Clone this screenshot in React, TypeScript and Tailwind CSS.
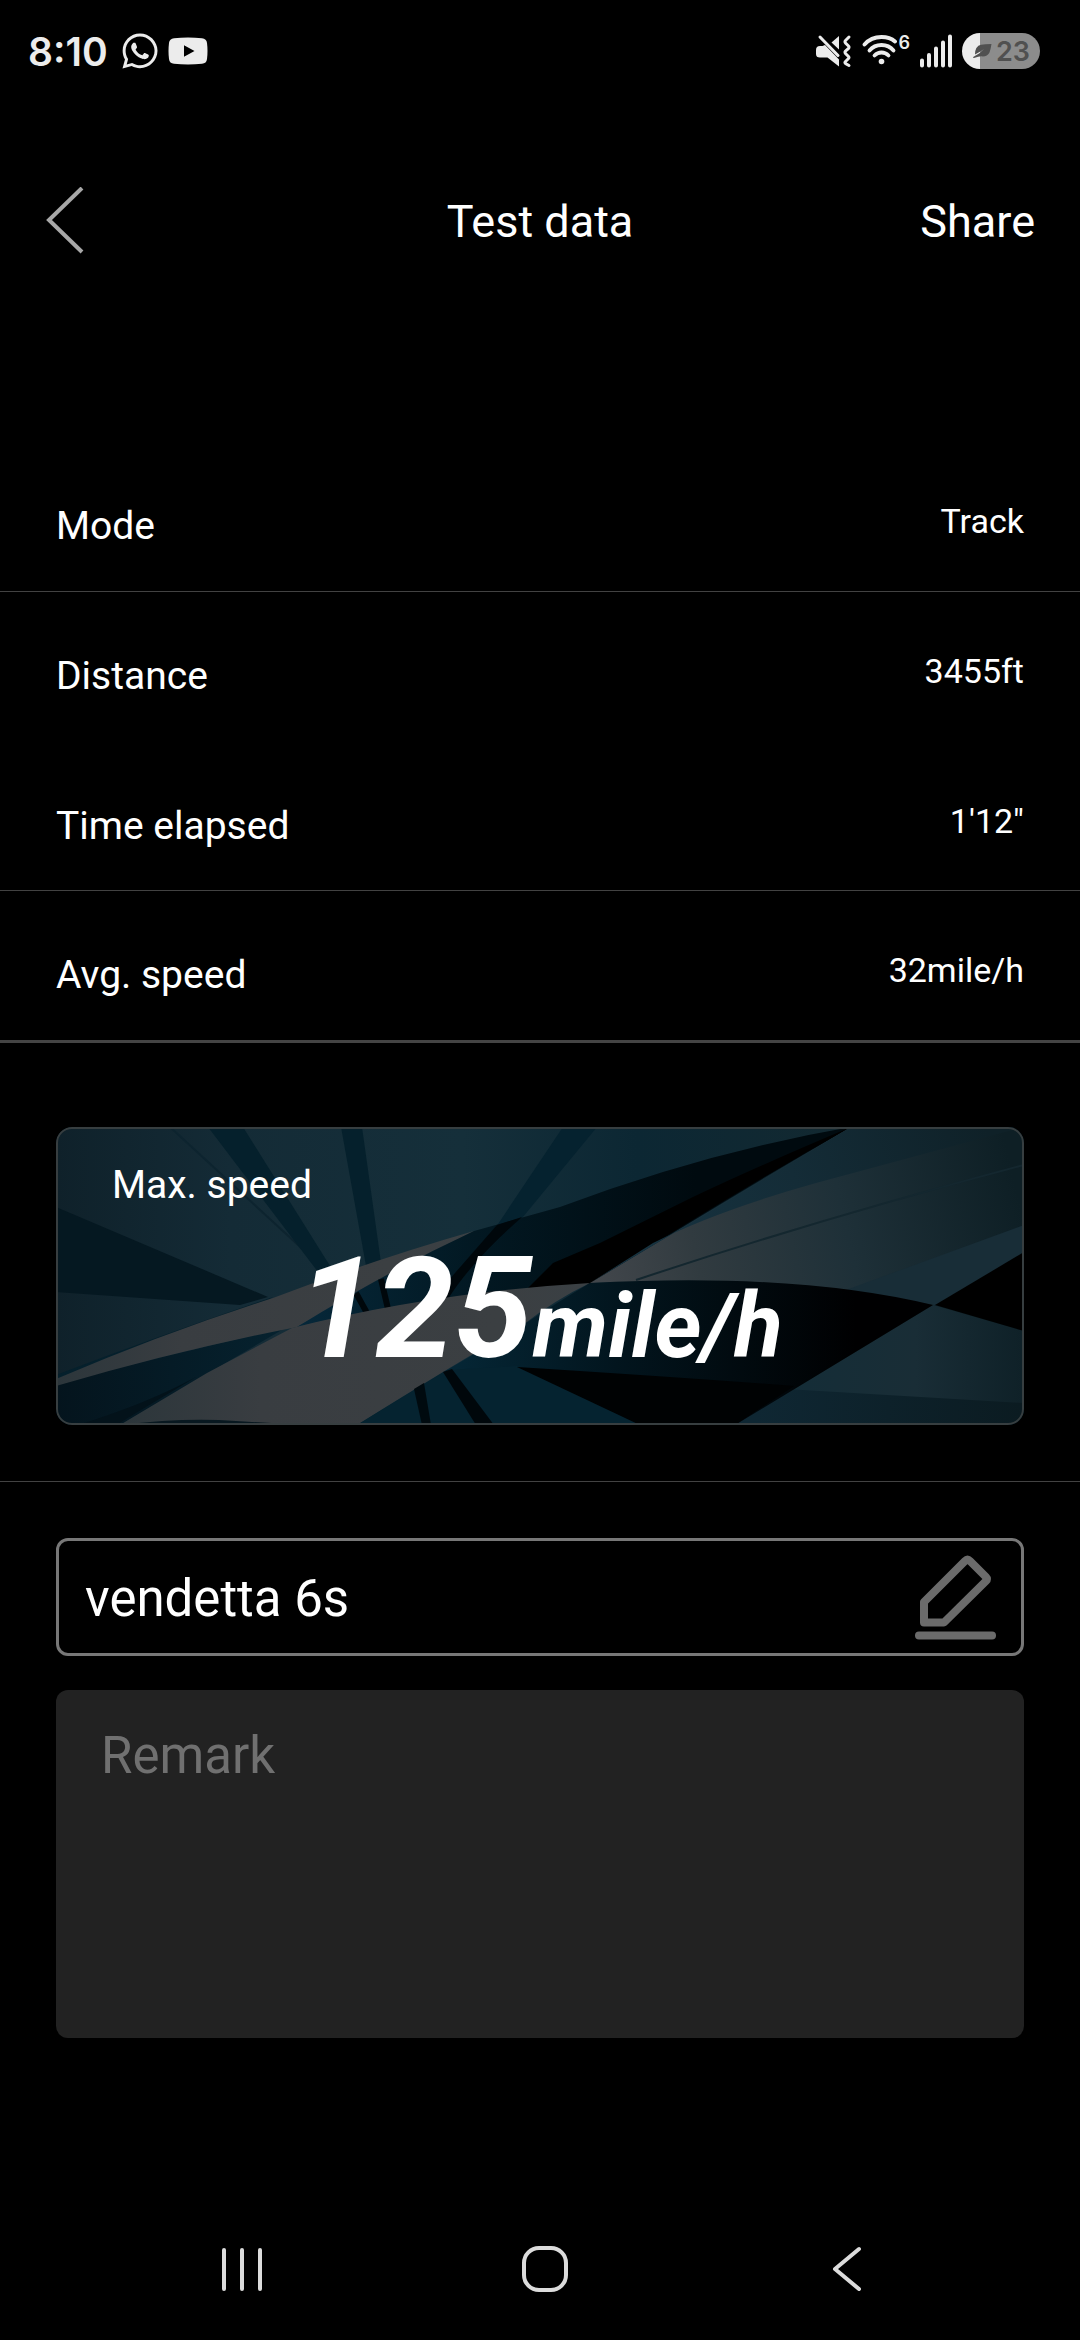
import { useState } from 'react'
import { FaWhatsapp } from 'react-icons/fa'

const stats = [
  { label: 'Mode', value: 'Track', line: 'h-[150px] border-b border-[#424242]' },
  { label: 'Distance', value: '3455ft', line: 'h-[150px]' },
  { label: 'Time elapsed', value: '1\'12"', line: 'h-[149px] border-b border-[#424242]' },
  { label: 'Avg. speed', value: '32mile/h', line: 'h-[152px] border-b-3 border-[#444444]' },
]

function YoutubeIcon() {
  return (
    <svg className="h-7 w-10" viewBox="0 0 40 28" aria-hidden="true">
      <path
        fill="#ececec"
        fillRule="evenodd"
        d="M6 1.2Q20 -.2 34 1.2Q38.5 1.6 39 6Q40 14 39 22Q38.5 26.4 34 26.8Q20 28.2 6 26.8Q1.5 26.4 1 22Q0 14 1 6Q1.5 1.6 6 1.2ZM16 8.2V19.8L26.5 14Z"
      />
    </svg>
  )
}

function MuteIcon() {
  return (
    <svg className="mr-2.5 h-9 w-9" viewBox="0 0 36 36" fill="none" aria-label="Sound off, vibrate">
      <path d="M0 17Q0 13 4 13H6.5L9 12L23 26.5V33.5L11.5 24.5H4Q0 24.5 0 21Z" fill="#ececec" />
      <path d="M23 3V16.5L15.5 9.5Z" fill="#ececec" />
      <path d="M4 4L22 22.5" stroke="#ececec" strokeWidth="3" strokeLinecap="round" />
      <path
        d="M33 4L29.5 7.5Q28.5 8.5 29.5 10L32.5 13Q33.5 14 32.5 15.5L29.5 18Q28.5 19 29.5 20.5L32.5 23.5Q33.5 24.5 32.5 25.5L29.5 28.5Q28.5 29.5 29.5 30.5L33 32.5"
        stroke="#ececec"
        strokeWidth="3"
        strokeLinecap="round"
      />
    </svg>
  )
}

function WifiIcon() {
  return (
    <svg className="h-9 w-9" viewBox="0 0 36 36" fill="none" stroke="#ececec" strokeWidth="3.8" strokeLinecap="round" aria-label="Wi-Fi">
      <path d="M2.5 11.5Q9 4 19.5 4Q28 4 33 8.5" />
      <path d="M7.5 17.5Q12 12 19.5 12Q27 12 31.5 17.5" />
      <path d="M12.5 22.5Q15.5 19.5 19.5 19.5Q23.5 19.5 26.5 22.5" />
      <circle cx="19.5" cy="28.5" r="2.8" fill="#ececec" stroke="none" />
    </svg>
  )
}

function SignalIcon() {
  return (
    <svg className="h-9 w-9" viewBox="0 0 36 36" stroke="#ececec" strokeWidth="4" strokeLinecap="round" aria-label="Signal">
      <path d="M4 27.5V32.5M11 22V32.5M18 15.5V32.5M25 9.5V32.5M32 3.5V32.5" />
    </svg>
  )
}

function LeafIcon() {
  return (
    <svg className="h-4 w-5" viewBox="0 0 20 16" aria-hidden="true">
      <path d="M3 11.5Q3 3 9 1.7Q13 1 19.5 1Q18.5 7 17.5 9.5Q15 14 9.5 13.3Q6.5 13.5 2 15Q0 14.8 2 13.5Q8 11 12 6Q7 9.5 3 11.5Z" fill="#505050" />
    </svg>
  )
}

function StatusBar() {
  return (
    <div className="flex h-[102px] items-center justify-between pr-10 pl-7 text-[#ececec]">
      <div className="flex items-center">
        <span className="mr-3 font-['Inter',sans-serif] text-[39px] leading-none font-semibold">8:10</span>
        <FaWhatsapp className="mr-2 h-10 w-10" />
        <YoutubeIcon />
      </div>
      <div className="flex items-center">
        <MuteIcon />
        <WifiIcon />
        <span className="mr-2 mb-4 font-['Inter',sans-serif] text-lg leading-none font-semibold">6</span>
        <SignalIcon />
        <div className="ml-2 flex h-9 w-[78px] items-center justify-center gap-1 rounded-full bg-linear-to-r from-[#ececec] from-23% to-[#8c8c8c] to-23% text-[#505050]">
          <LeafIcon />
          <span className="font-['Inter',sans-serif] text-[27px] leading-none font-semibold">23</span>
        </div>
      </div>
    </div>
  )
}

function CardArt() {
  return (
    <svg className="absolute inset-0 h-full w-full" viewBox="0 0 968 298" preserveAspectRatio="none" aria-hidden="true">
      <defs>
        <linearGradient id="base" x1="0" x2="1" y1="0" y2="0">
          <stop offset="0" stopColor="#0f212a" />
          <stop offset=".18" stopColor="#142b36" />
          <stop offset=".42" stopColor="#152f3a" />
          <stop offset=".6" stopColor="#0c2733" />
          <stop offset=".82" stopColor="#132931" />
          <stop offset="1" stopColor="#0c1d22" />
        </linearGradient>
        <linearGradient id="left" x1="0" x2="1" y1="0" y2="0">
          <stop offset="0" stopColor="#04141d" />
          <stop offset="1" stopColor="#06222f" />
        </linearGradient>
        <linearGradient id="band" x1="0" x2="1" y1="0" y2="0">
          <stop offset="0" stopColor="#2c363b" />
          <stop offset=".3" stopColor="#393d41" />
          <stop offset=".8" stopColor="#3b3f42" />
          <stop offset="1" stopColor="#3a4044" />
        </linearGradient>
        <linearGradient id="dark" x1="241" x2="640" y1="0" y2="0" gradientUnits="userSpaceOnUse">
          <stop offset="0" stopColor="#06283a" />
          <stop offset=".45" stopColor="#021822" />
          <stop offset="1" stopColor="#000a0f" />
        </linearGradient>
        <linearGradient id="flare" x1="534" x2="960" y1="156" y2="60" gradientUnits="userSpaceOnUse">
          <stop offset="0" stopColor="#43474c" />
          <stop offset=".25" stopColor="#313b40" />
          <stop offset=".6" stopColor="#1e3038" />
          <stop offset="1" stopColor="#0e1f25" />
        </linearGradient>
        <linearGradient id="upper" x1="560" x2="930" y1="140" y2="0" gradientUnits="userSpaceOnUse">
          <stop offset="0" stopColor="#173442" />
          <stop offset=".5" stopColor="#142c37" />
          <stop offset="1" stopColor="#0f2128" />
        </linearGradient>
        <linearGradient id="belly" x1="400" x2="800" y1="0" y2="0" gradientUnits="userSpaceOnUse">
          <stop offset="0" stopColor="#052635" />
          <stop offset=".4" stopColor="#02151e" />
          <stop offset="1" stopColor="#000001" />
        </linearGradient>
        <linearGradient id="corner" x1="700" x2="966" y1="0" y2="0" gradientUnits="userSpaceOnUse">
          <stop offset="0" stopColor="#132d38" />
          <stop offset=".6" stopColor="#192d36" />
          <stop offset="1" stopColor="#0f2128" />
        </linearGradient>
        <linearGradient id="floor" x1="700" x2="966" y1="0" y2="0" gradientUnits="userSpaceOnUse">
          <stop offset="0" stopColor="#0f2733" />
          <stop offset="1" stopColor="#0b1b21" />
        </linearGradient>
      </defs>
      <rect width="968" height="298" fill="url(#base)" />

      {/* rays behind the ribbons */}
      <path d="M0 80L212 170L184 178L0 165Z" fill="#051821" />
      <path d="M114 0L266 140" stroke="#0d242f" strokeWidth="2" />
      <path d="M152 0H187L281 150L262 145Z" fill="#05202c" />
      <path d="M285 0H306L327 150H312Z" fill="#05202c" />
      <path d="M507 0H541L462 96L436 106Z" fill="#05222f" />

      {/* left ribbon */}
      <path d="M0 248Q100 210 217 170L117 234L0 262Z" fill="#05202c" />
      <path d="M0 256L231 200L64 298H0Z" fill="url(#left)" />
      <path d="M22 298Q90 277 140 250L60 298Z" fill="#03121a" />
      <path d="M0 252Q110 205 217 171Q320 132 418 104Q330 150 241 200L231 202Q120 224 0 259Z" fill="url(#band)" />

      {/* long dark blade */}
      <path d="M241 200Q330 145 418 104L504 80Q650 25 795 0Q670 72 534 157Q380 166 241 200Z" fill="url(#dark)" />
      <path d="M441 98L466 90Q415 135 392 172L378 170Z" fill="#00070b" />
      <path d="M300 166L311 186M325 152L332 182" stroke="#00070b" strokeWidth="6" />
      <path d="M795 0Q700 40 637 70L544 116L497 136L472 161L534 157Q670 70 795 0Z" fill="#000000" />

      {/* lower ribbon */}
      <path d="M301 298L391 243L461 239L585 298Z" fill="#052330" />
      <path d="M64 298L151 246L236 201Q380 165 534 156Q500 172 464 200Q410 230 301 298Z" fill="url(#band)" />
      <path d="M64 298Q130 290 180 294L250 298Z" fill="#081820" />

      {/* right side */}
      <path d="M534 156L795 0H968V178H877Q720 150 534 156Z" fill="url(#flare)" />
      <path d="M534 156L795 0H968L760 56Q660 84 597 116Z" fill="url(#upper)" />
      <path d="M580 153Q760 93 968 38" fill="none" stroke="#14272f" strokeWidth="2" />
      <path d="M790 163L968 98V140L880 178Z" fill="#182d37" />
      <path d="M877 178L968 204V298H679Z" fill="url(#corner)" />
      <path d="M730 262L968 276V298H679Z" fill="url(#floor)" />
      <path d="M534 156Q740 145 877 178L679 298H584L461 240L391 243L464 200Q500 176 534 156Z" fill="url(#belly)" />
      <path d="M391 243L461 239L585 298H301Z" fill="#052330" />
      <path d="M358 262L368 256L375 298H366Z" fill="#000a0f" />
      <path d="M387 245L396 242L438 298H420Z" fill="#00070b" />
      <path d="M461 240Q620 250 738 259L679 298H584Z" fill="#000203" />
      <path d="M879 178L968 125V204Z" fill="#000000" />
    </svg>
  )
}

function PencilIcon() {
  return (
    <svg className="h-[88px] w-[88px]" viewBox="0 0 88 88" fill="none" stroke="#6b6b6b" strokeWidth="8" strokeLinejoin="round" strokeLinecap="round" aria-hidden="true">
      <path d="M13 47L54 6Q56.5 3.5 59 6L75 22Q77 24 75 26L33 67.5H13Z" />
      <path d="M8 80.5H81" />
    </svg>
  )
}

export default function App() {
  const [name, setName] = useState('vendetta 6s')
  const [remark, setRemark] = useState('')

  return (
    <div className="flex min-h-screen flex-col bg-black font-['Roboto',sans-serif] text-white">
      <StatusBar />

      <header className="grid h-[238px] grid-cols-3 items-center px-[45px] text-[45px] leading-none">
        <button type="button" aria-label="Back">
          <svg className="h-[68px] w-10" viewBox="0 0 40 68" fill="none" stroke="#a8a8a8" strokeWidth="4">
            <path d="M37 1L4 33L37 65" />
          </svg>
        </button>
        <h1 className="text-center">Test data</h1>
        <button type="button" className="text-right">Share</button>
      </header>

      <main className="mt-[102px]">
        <dl>
          {stats.map(({ label, value, line }) => (
            <div key={label} className={`flex items-start justify-between px-14 pt-15 ${line}`}>
              <dt className="text-[39px] leading-[48px]">{label}</dt>
              <dd className="text-[34px] leading-[38px]">{value}</dd>
            </div>
          ))}
        </dl>

        <section className="border-b border-[#424242] px-14 pt-[84px] pb-14">
          <div className="relative h-[298px] overflow-hidden rounded-2xl">
            <CardArt />
            <div className="relative h-full rounded-2xl border-2 border-[#373e40] px-[54px] pt-8">
              <h2 className="text-[39px] leading-[48px]">Max. speed</h2>
              <p className="mt-5 text-center text-[141px] leading-[160px] font-bold italic">
                125<span className="text-[90px]">mile/h</span>
              </p>
            </div>
          </div>
        </section>

        <form className="flex flex-col gap-[34px] px-14 pt-14">
          <div className="flex h-[118px] items-center justify-between rounded-xl border-3 border-[#777777] pt-1 pr-[22px] pl-[26px]">
            <input
              aria-label="Name"
              className="min-w-0 flex-1 bg-transparent text-[51px] leading-[60px] outline-none"
              value={name}
              onChange={(e) => setName(e.target.value)}
            />
            <button type="button" aria-label="Edit name">
              <PencilIcon />
            </button>
          </div>
          <textarea
            aria-label="Remark"
            placeholder="Remark"
            className="h-[348px] resize-none rounded-xl bg-[#222222] px-[45px] pt-9 text-[51px] leading-[60px] outline-none placeholder:text-[#707070]"
            value={remark}
            onChange={(e) => setRemark(e.target.value)}
          />
        </form>
      </main>

      <nav className="mt-auto flex h-[142px] items-center justify-between pr-[203px] pl-[212px]">
        <button type="button" aria-label="Recent apps">
          <svg className="h-12 w-15" viewBox="0 0 60 48" stroke="#dcdcdc" strokeWidth="4" strokeLinecap="round">
            <path d="M12 5V44M30 5V44M48 5V44" />
          </svg>
        </button>
        <button type="button" aria-label="Home">
          <svg className="h-12 w-15" viewBox="0 0 60 48" fill="none" stroke="#dcdcdc" strokeWidth="4">
            <rect x="9" y="3" width="42" height="42" rx="15" />
          </svg>
        </button>
        <button type="button" aria-label="Back">
          <svg className="h-12 w-15" viewBox="0 0 60 48" fill="none" stroke="#dcdcdc" strokeWidth="4" strokeLinecap="round" strokeLinejoin="round">
            <path d="M42 4L18 24L42 44" />
          </svg>
        </button>
      </nav>
    </div>
  )
}
